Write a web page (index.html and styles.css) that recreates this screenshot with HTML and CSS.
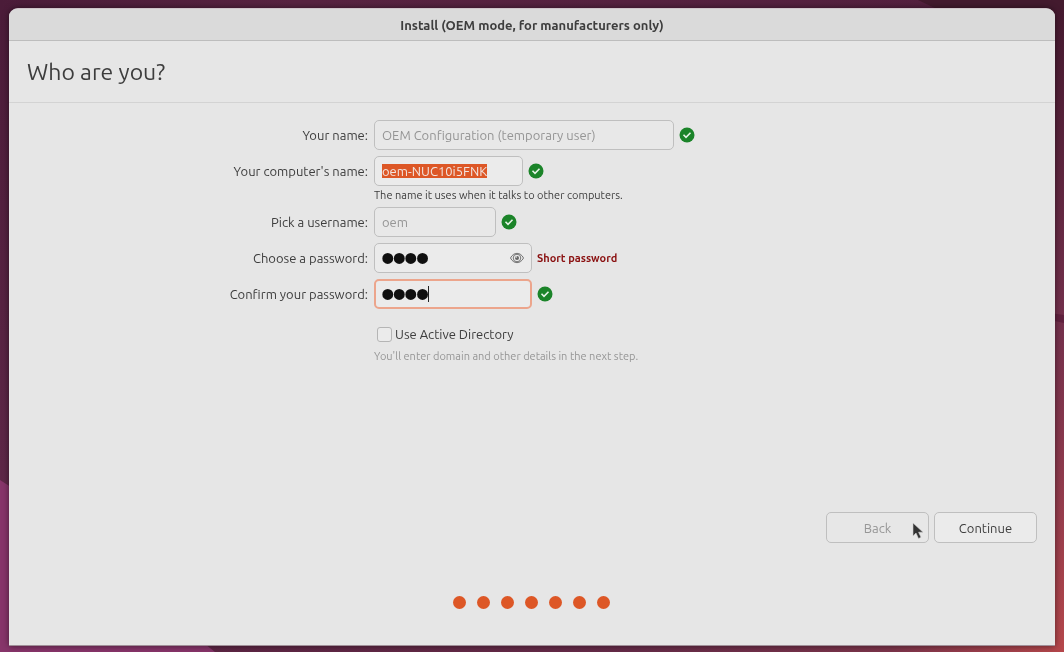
FILE: index.html
```html
<!DOCTYPE html>
<html lang="en">
<head>
<meta charset="utf-8">
<meta name="viewport" content="width=device-width, initial-scale=1">
<title>Install (OEM mode, for manufacturers only)</title>
<link rel="stylesheet" href="styles.css">
</head>
<body>
<svg class="wallpaper" viewBox="0 0 1064 652" preserveAspectRatio="none" aria-hidden="true">
  <defs>
    <linearGradient id="left" x1="0" y1="0" x2="0" y2="1"><stop offset="0" stop-color="#4b1c39"/><stop offset="1" stop-color="#642b4c"/></linearGradient>
    <linearGradient id="top" x1="0" y1="0" x2="1" y2="0"><stop offset="0" stop-color="#4b1c39"/><stop offset=".3" stop-color="#582341"/><stop offset="1" stop-color="#54203f"/></linearGradient>
    <linearGradient id="right" x1="0" y1="0" x2="0" y2="1"><stop offset="0" stop-color="#45192f"/><stop offset=".48" stop-color="#73304c"/><stop offset=".7" stop-color="#8b394d"/><stop offset="1" stop-color="#b5474b"/></linearGradient>
    <linearGradient id="base" x1="0" y1="0" x2="1" y2="0"><stop offset="0" stop-color="#5c2543"/><stop offset=".5" stop-color="#662b48"/><stop offset=".8" stop-color="#7c344a"/><stop offset="1" stop-color="#b5474b"/></linearGradient>
  </defs>
  <rect width="1064" height="652" fill="#5a2342"/>
  <rect width="500" height="640" fill="url(#left)"/>
  <rect width="980" height="20" fill="url(#top)"/>
  <path d="M918 0H1064V20H960Z" fill="#431a2e"/>
  <rect x="960" y="9" width="104" height="643" fill="url(#right)"/>
  <path d="M1050 313L1064 315V323L1050 320Z" fill="#60213f"/>
  <rect x="200" y="640" width="864" height="12" fill="url(#base)"/>
  <path d="M0 480L20 493V640H200L215 652H0Z" fill="#87356a"/>
</svg>

<main class="window">
  <header class="titlebar">Install (OEM mode, for manufacturers only)</header>
  <h1 class="heading">Who are you?</h1>

  <form class="setup">
    <div class="form-grid">
      <label for="name">Your name:</label>
      <div class="field">
        <input class="entry entry-name" id="name" type="text" value="OEM Configuration (temporary user)" disabled>
        <svg class="check" viewBox="0 0 16 16"><circle cx="8" cy="8" r="7.5"/><path d="M4.5 7.8L7 10.3L11.5 5.8"/></svg>
      </div>

      <label for="computer">Your computer's name:</label>
      <div>
        <div class="field">
          <input class="entry entry-computer" id="computer" type="text" value="oem-NUC10i5FNK" spellcheck="false">
          <svg class="check" viewBox="0 0 16 16"><circle cx="8" cy="8" r="7.5"/><path d="M4.5 7.8L7 10.3L11.5 5.8"/></svg>
        </div>
        <p class="hint">The name it uses when it talks to other computers.</p>
      </div>

      <label for="username">Pick a username:</label>
      <div class="field">
        <input class="entry entry-username" id="username" type="text" value="oem" disabled>
        <svg class="check" viewBox="0 0 16 16"><circle cx="8" cy="8" r="7.5"/><path d="M4.5 7.8L7 10.3L11.5 5.8"/></svg>
      </div>

      <label for="password">Choose a password:</label>
      <div class="field">
        <div class="secret">
          <input class="entry password" id="password" type="password" value="1234">
          <button class="reveal" type="button" aria-label="Show password">
            <svg viewBox="0 0 16 16"><path d="M1.500 8C4.500 1.800 11.500 1.800 14.500 8C11.500 14.200 4.500 14.200 1.500 8Z"/><circle cx="8" cy="8" r="3.800"/><circle class="pupil" cx="8" cy="8" r="2"/><circle class="glint" cx="7.200" cy="7" r=".8"/></svg>
          </button>
        </div>
        <strong class="warning">Short password</strong>
      </div>

      <label for="confirm">Confirm your password:</label>
      <div class="field">
        <div class="secret">
          <input class="entry password active" id="confirm" type="password" value="1234">
          <span class="caret"></span>
        </div>
        <svg class="check" viewBox="0 0 16 16"><circle cx="8" cy="8" r="7.5"/><path d="M4.5 7.8L7 10.3L11.5 5.8"/></svg>
      </div>

      <div class="directory">
        <label class="option"><input class="tick" type="checkbox">Use Active Directory</label>
        <p class="hint muted">You'll enter domain and other details in the next step.</p>
      </div>
    </div>

    <div class="actions">
      <button class="button" type="button" disabled>Back</button>
      <button class="button" type="submit">Continue</button>
      <svg class="pointer" viewBox="0 0 12 18" aria-hidden="true"><path d="M1 1V14L4 11L6.500 16.500L9 15.300L6.600 10.200H11Z"/></svg>
    </div>
  </form>

  <div class="progress" aria-hidden="true"><i></i><i></i><i></i><i></i><i></i><i></i><i></i></div>
</main>
<script src="script.js"></script>
</body>
</html>
```
FILE: styles.css
```css
* { box-sizing: border-box; }

body {
  margin: 0;
  min-height: 100vh;
  padding: 8px 9px 6px;
  display: flex;
  background: #5a2342;
  color: #3d3d3d;
  font-family: Ubuntu, "Noto Sans", sans-serif;
  font-size: 13px;
  line-height: 20px;
}

.wallpaper {
  position: fixed;
  inset: 0;
  width: 100%;
  height: 100%;
}

.window {
  position: relative;
  flex: 1;
  display: flex;
  flex-direction: column;
  background: #e6e6e6;
  border-top: 1px solid #cfc4ca;
  border-bottom: 1px solid #a08f98;
  border-radius: 9px 9px 0 0;
  box-shadow: 0 0 6px rgba(0, 0, 0, .5);
}

.titlebar {
  height: 32px;
  border-bottom: 1px solid #bdbdbd;
  border-radius: 8px 8px 0 0;
  background: #dadada;
  line-height: 32px;
  font-weight: 700;
  text-align: center;
}

.heading {
  margin: 0;
  padding: 15px 18px 14px;
  border-bottom: 1px solid #d3d3d3;
  font-size: 23px;
  line-height: 32px;
  font-weight: 400;
}

.setup {
  flex: 1;
  display: flex;
  flex-direction: column;
  padding-top: 17px;
}

.form-grid {
  display: grid;
  grid-template-columns: 359fr 681fr;
  gap: 6px;
}

.form-grid > label {
  line-height: 30px;
  text-align: right;
}

.field {
  display: flex;
  align-items: center;
  gap: 5px;
}

.entry {
  display: block;
  height: 30px;
  margin: 0;
  padding: 0 7px;
  border: 1px solid #bfbfbf;
  border-radius: 5px;
  outline: 0;
  background: #ebebeb;
  color: #3d3d3d;
  font: inherit;
}

.entry:disabled { background: #e8e8e8; color: #959595; }
.entry::selection { background: #dd5726; color: #f2e4df; }
.entry-name { width: 300px; }
.entry-computer { width: 149px; }
.entry-username { width: 122px; }

.password {
  width: 158px;
  padding-top: 2px;
  color: #101010;
  font-family: "Liberation Sans", sans-serif;
  font-size: 33px;
  -webkit-text-stroke: 2px #101010;
}

.active {
  border: 2px solid #eca58c;
  padding: 2px 6px 0;
}

.secret { position: relative; }

.reveal {
  position: absolute;
  top: 7px;
  right: 7px;
  width: 16px;
  height: 16px;
  padding: 0;
  border: 0;
  background: none;
}

.reveal svg { display: block; fill: none; stroke: #737373; }
.reveal .pupil { fill: #666; stroke: none; }
.reveal .glint { fill: #ebebeb; stroke: none; }

.caret {
  position: absolute;
  top: 7px;
  left: 54px;
  width: 1px;
  height: 16px;
  background: #222;
}

.check { width: 16px; height: 16px; fill: #1b8429; }
.check path { fill: none; stroke: #e6f3e7; stroke-width: 1.6; }

.hint {
  margin: 0;
  padding-top: 3px;
  font-size: 11px;
  line-height: 12px;
}

.muted { color: #969696; }
.warning { color: #8a1010; font-size: 11px; }

.directory { grid-column: 2; padding-top: 9px; }

.option {
  display: flex;
  align-items: center;
  gap: 3px;
  padding-left: 3px;
  margin-bottom: 3px;
}

.tick {
  appearance: none;
  width: 15px;
  height: 15px;
  margin: 0;
  border: 1px solid #b5b5b5;
  border-radius: 3px;
  background: #ebebeb;
}

.tick:checked { background: #dd5726; }

.actions {
  position: relative;
  display: flex;
  justify-content: flex-end;
  gap: 5px;
  margin-top: auto;
  padding-right: 18px;
}

.button {
  width: 103px;
  height: 31px;
  padding: 0;
  border: 1px solid #bfbfbf;
  border-radius: 5px;
  background: #ebebeb;
  color: #3d3d3d;
  font: inherit;
}

.button:disabled { background: #e7e7e7; color: #969696; }

.pointer {
  position: absolute;
  top: 10px;
  right: 131px;
  width: 12px;
  height: 18px;
  fill: #333;
  stroke: #d0d0d0;
  stroke-width: .6;
}

.progress {
  display: flex;
  justify-content: center;
  gap: 11px;
  padding: 53px 2px 36px 0;
}

.progress i {
  width: 13px;
  height: 13px;
  border-radius: 50%;
  background: #dd5726;
}
```
FILE: script.js
```javascript
const computer = document.getElementById("computer");
computer.focus();
computer.select();
```
